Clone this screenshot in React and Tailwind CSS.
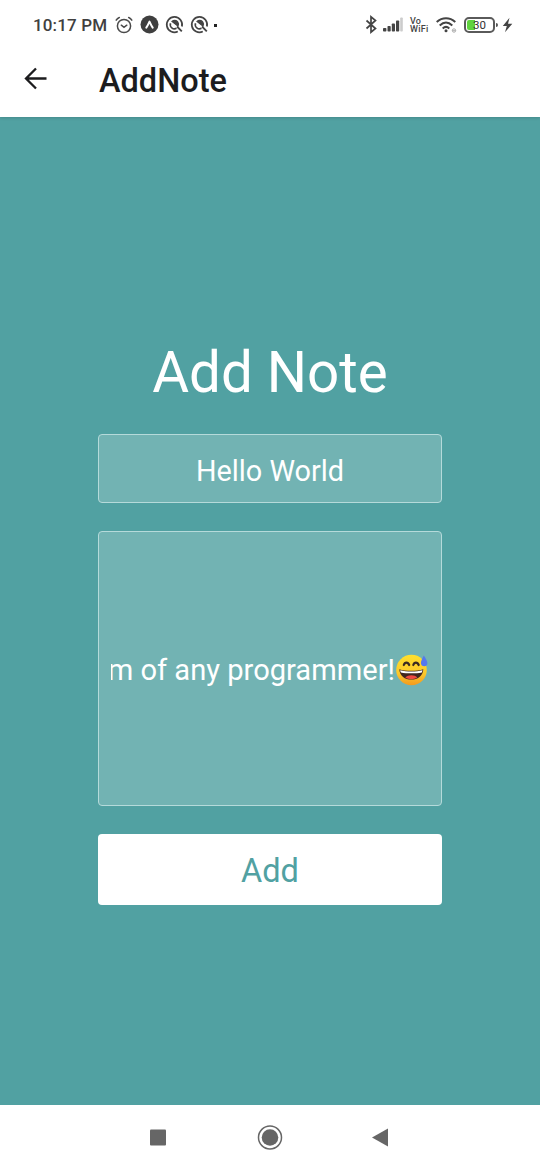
import React from "react";

function AlarmIcon() {
  return (
    <svg className="ml-[8px] h-5 w-[18px] shrink-0" viewBox="0 0 18 20" fill="none" stroke="#4a4a4a" strokeWidth="1.5" strokeLinecap="round">
      <circle cx="9" cy="11" r="6.6" />
      <path d="M6.3 10.2 9 12.3l2.8-2.1" />
      <path d="M1.2 5.2C2 3.8 3 3 4.3 2.5M16.8 5.2C16 3.8 15 3 13.7 2.5" />
    </svg>
  );
}

function ExpoIcon() {
  return (
    <svg className="ml-[7px] h-5 w-[19px] shrink-0" viewBox="0 0 19 20">
      <circle cx="9.5" cy="9.5" r="9" fill="#3f3f3f" />
      <path d="M6.300 12.700C7.500 11 8.500 8.800 9.500 6.600c1 2.200 2 4.400 3.200 6.100" fill="none" stroke="#fff" strokeWidth="2" strokeLinecap="round" strokeLinejoin="round" />
    </svg>
  );
}

function SearchRingIcon() {
  return (
    <svg className="ml-1.5 h-5 w-[19px] shrink-0" viewBox="0 0 19 20" fill="none" stroke="#444">
      <path d="M12.800 16.500A7.700 7.700 0 1 1 16.900 11.500" strokeWidth="1.700" />
      <path d="M5.500 8.300a4.200 4.200 0 0 0 6 5" strokeWidth="1.600" />
      <path d="M7 6.500C8.500 5 11.500 5 12.800 7c.9 1.400.8 2.800.2 4Z" fill="#444" strokeWidth="1.200" />
      <path d="m12 11.500 4.800 4.800" strokeWidth="1.800" />
    </svg>
  );
}

function BluetoothIcon() {
  return (
    <svg className="h-5 w-3 shrink-0" viewBox="0 0 12 20" fill="none" stroke="#444" strokeWidth="1.700">
      <path d="m1.500 5.500 9 8-4.500 3.700V1.800l4.500 3.700-9 8" />
    </svg>
  );
}

function SignalIcon() {
  return (
    <svg className="ml-1.5 h-5 w-5 shrink-0" viewBox="0 0 20 20" fill="#444">
      <rect x="0" y="13" width="3.400" height="3.500" rx=".8" />
      <rect x="4.500" y="11" width="3.200" height="5.500" rx=".8" />
      <rect x="8.800" y="8.500" width="3.200" height="8" rx=".8" />
      <rect x="13" y="5.500" width="3.200" height="11" rx=".8" />
      <rect x="17.200" y="2.500" width="2.600" height="14" rx=".8" fill="#ccc" />
    </svg>
  );
}

function WifiIcon() {
  return (
    <svg className="ml-[6px] h-5 w-[22px] shrink-0" viewBox="0 0 22 20" fill="none" stroke="#444" strokeWidth="2">
      <path d="M.7 7c5.600-5 13-5 18.600 0M3.700 10.400c4-3.600 8.600-3.600 12.600 0M6.700 13.400c2-1.800 4.600-1.800 6.600 0" />
      <circle cx="10" cy="15.800" r="1.500" fill="#444" stroke="none" />
      <circle cx="18" cy="15.500" r="1.700" stroke="#aaa" strokeWidth="1" />
      <path d="M16.300 15.500h3.300" stroke="#aaa" strokeWidth=".8" />
    </svg>
  );
}

function Battery() {
  return (
    <div className="ml-[6px] flex h-[17px] items-center">
      <div className="flex h-4 w-[31px] rounded-[5px] border-2 border-[#5a5a5a] p-px">
        <div className="relative flex flex-1 items-center justify-center">
          <div className="absolute inset-y-0 left-0 w-2 rounded-l-[2px] bg-[#5fd33e]" />
          <span className="relative pt-px text-[11.5px] leading-none text-[#333]">30</span>
        </div>
      </div>
      <div className="ml-px h-1 w-0.5 rounded-r-sm bg-[#555]" />
    </div>
  );
}

function StatusBar() {
  return (
    <div className="flex h-[50px] items-center pr-[27px] pl-[33px]">
      <span className="w-[74px] text-[17px] font-medium leading-5 tracking-[0.15px] whitespace-nowrap text-[#404040]">10:17 PM</span>
      <AlarmIcon />
      <ExpoIcon />
      <SearchRingIcon />
      <SearchRingIcon />
      <span className="ml-[5px] size-[3px] bg-[#222]" />
      <div className="ml-auto flex items-center">
        <BluetoothIcon />
        <SignalIcon />
        <div className="ml-[7px] flex w-5 flex-col text-[9px] leading-[8.5px] font-medium tracking-[0.25px] text-[#444]">
          <span>Vo</span>
          <span>WiFi</span>
        </div>
        <WifiIcon />
        <Battery />
        <svg className="ml-1 h-4 w-[11px] shrink-0" viewBox="0 0 11 16" fill="#444">
          <path d="M7.500.800.800 9h4L3 15.200 10.300 6.700H6Z" />
        </svg>
      </div>
    </div>
  );
}

function SweatSmile() {
  return (
    <svg role="img" aria-label="😅" className="mt-px h-8 w-[34px] shrink-0" viewBox="-2 0 34 32">
      <defs>
        <linearGradient id="face" x1="0" y1="0" x2="0" y2="1">
          <stop offset="0" stopColor="#ffe02d" />
          <stop offset=".6" stopColor="#fdc92a" />
          <stop offset="1" stopColor="#f39a1e" />
        </linearGradient>
      </defs>
      <circle cx="14.500" cy="16" r="15.300" fill="url(#face)" />
      <path d="M6.800 11c1-3.200 4.200-3.200 5.400 0M16.300 11c1-3.200 4.200-3.200 5.400 0" fill="none" stroke="#3c2b22" strokeWidth="2.200" strokeLinecap="round" />
      <path d="M2.300 15.200c6 2 18 2 24 0-.4 7-5.700 10.400-12 10.400S2.700 22.200 2.300 15.200Z" fill="#40251f" />
      <path d="M3.200 16.200c6 1.800 16.400 1.800 22.300 0-.2 1-.4 1.600-.7 2.200-6 1.200-14.900 1.200-20.900 0-.3-.6-.6-1.200-.7-2.200Z" fill="#fff" />
      <path d="M8.300 23.600c3-3 9.300-3 12 0-3.200 2-8.800 2-12 0Z" fill="#ef4840" />
      <path d="M26.800 1.500c-1.600 3.200-2.900 5.400-2.900 7.500 0 2 1.400 3.300 3.400 3.300s3.300-1.500 3.100-3.500c-.3-2.500-2-4.800-3.600-7.300Z" fill="#5578ee" />
    </svg>
  );
}

function NavigationBar() {
  return (
    <div className="flex h-[65px] items-center justify-center gap-[84px] bg-white">
      <svg className="h-7 w-7" viewBox="0 0 28 28" fill="#666">
        <rect x="6" y="5.500" width="16" height="16" rx="1" />
      </svg>
      <svg className="h-7 w-7" viewBox="0 0 28 28">
        <circle cx="14" cy="13.500" r="11.500" fill="none" stroke="#666" strokeWidth="1.500" />
        <circle cx="14" cy="13.500" r="8.300" fill="#666" />
      </svg>
      <svg className="h-7 w-7" viewBox="0 0 28 28" fill="#666">
        <path d="M4 13.500 20 4.500v18Z" />
      </svg>
    </div>
  );
}

export default function App() {
  return (
    <div className="flex h-[1170px] w-[540px] flex-col overflow-hidden bg-[#51a1a2] font-['Roboto',sans-serif]">
      <header className="z-10 h-[117px] bg-white shadow-[0_1px_3px_rgba(0,0,0,0.15)]">
        <StatusBar />
        <div className="flex h-[60px] items-center pl-6">
          <svg className="-mt-1 h-6 w-6" viewBox="0 0 24 24" fill="none" stroke="#1c1c1e" strokeWidth="2.300">
            <path d="M22.500 12.500H2.500M12 2.500l-10 10 10 10" />
          </svg>
          <h1 className="mt-px ml-[51px] text-[32.5px] leading-9 font-medium text-[#1c1c1e]">AddNote</h1>
        </div>
      </header>
      <main className="flex flex-1 flex-col items-center pt-[223px]">
        <h2 className="text-[56.5px] leading-[67px] whitespace-nowrap text-white">Add Note</h2>
        <div className="mt-[27px] flex h-[69px] w-[344px] items-center justify-center rounded-[4px] border border-[#b5dada] bg-[#72b3b3] text-[28.8px] leading-none text-white">
          <span className="mt-[5px]">Hello World</span>
        </div>
        <div className="mt-7 flex h-[275px] w-[344px] items-center rounded-[4px] border border-[#b5dada] bg-[#72b3b3] px-3 text-[29.1px] text-white">
          <div className="mt-0.5 flex w-full items-center justify-end overflow-hidden leading-10">
            <span className="whitespace-nowrap">m of any programmer!</span>
            <SweatSmile />
          </div>
        </div>
        <button className="mt-7 h-[71px] w-[344px] rounded-[4px] bg-white pt-[3px] text-[32.5px] leading-none text-[#51a1a2]">Add</button>
      </main>
      <NavigationBar />
    </div>
  );
}
